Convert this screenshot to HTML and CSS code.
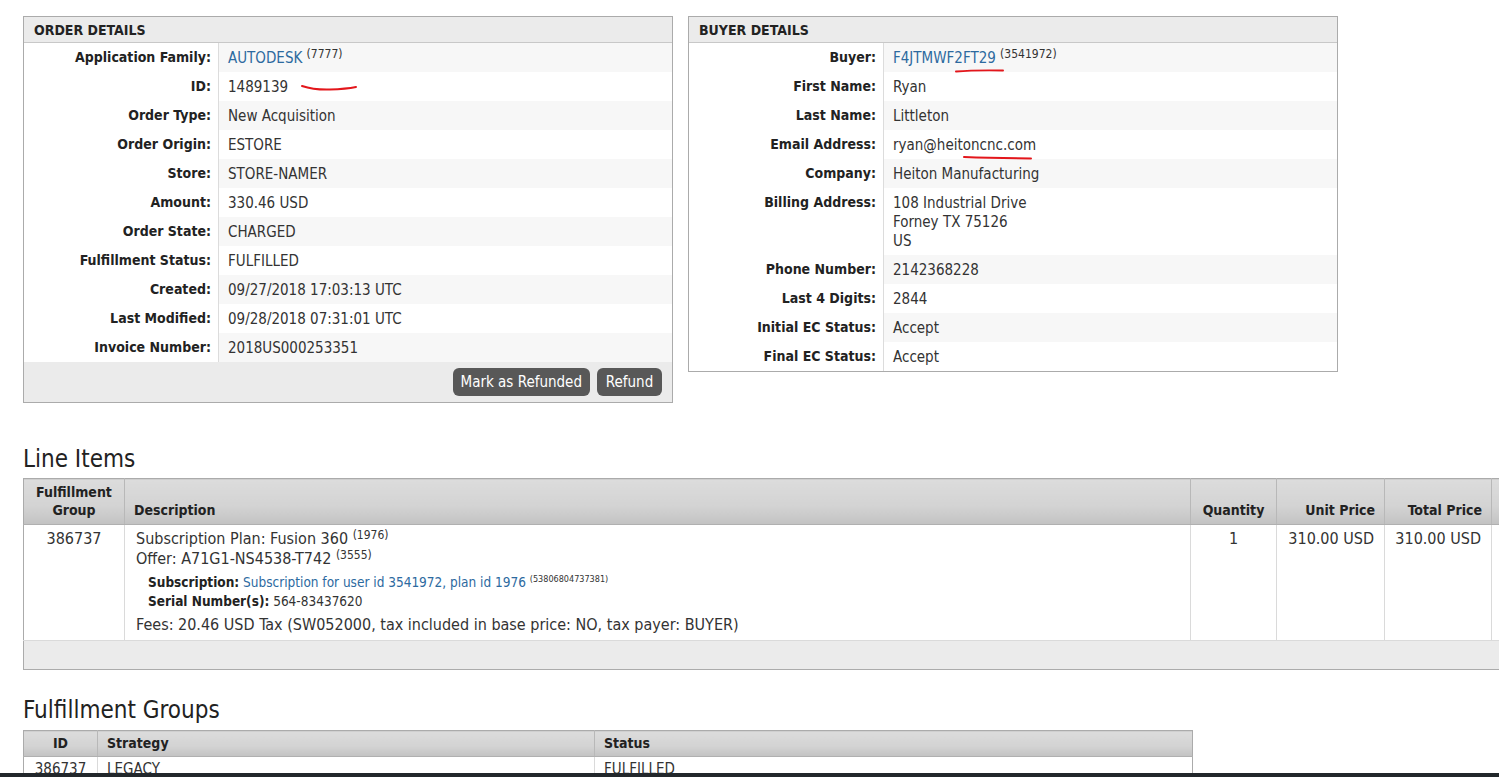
FILE: index.html
```html
<!DOCTYPE html>
<html>
<head>
<meta charset="utf-8">
<title>Order</title>
<link rel="stylesheet" href="styles.css">
</head>
<body>
<div class="page">
  <div class="panels">
    <div class="panel">
      <div class="panel-head">ORDER DETAILS</div>
      <table class="kv">
        <tr><th>Application Family:</th><td><a class="lnk">AUTODESK</a> <sup>(7777)</sup></td></tr>
        <tr><th>ID:</th><td>1489139</td></tr>
        <tr><th>Order Type:</th><td>New Acquisition</td></tr>
        <tr><th>Order Origin:</th><td>ESTORE</td></tr>
        <tr><th>Store:</th><td>STORE-NAMER</td></tr>
        <tr><th>Amount:</th><td>330.46 USD</td></tr>
        <tr><th>Order State:</th><td>CHARGED</td></tr>
        <tr><th>Fulfillment Status:</th><td>FULFILLED</td></tr>
        <tr><th>Created:</th><td>09/27/2018 17:03:13 UTC</td></tr>
        <tr><th>Last Modified:</th><td>09/28/2018 07:31:01 UTC</td></tr>
        <tr><th>Invoice Number:</th><td>2018US000253351</td></tr>
      </table>
      <div class="panel-foot">
        <button class="btn">Mark as Refunded</button>
        <button class="btn">Refund</button>
      </div>
    </div>
    <div class="panel">
      <div class="panel-head">BUYER DETAILS</div>
      <table class="kv">
        <tr><th>Buyer:</th><td><a class="lnk">F4JTMWF2FT29</a> <sup>(3541972)</sup></td></tr>
        <tr><th>First Name:</th><td>Ryan</td></tr>
        <tr><th>Last Name:</th><td>Littleton</td></tr>
        <tr><th>Email Address:</th><td>ryan@heitoncnc.com</td></tr>
        <tr><th>Company:</th><td>Heiton Manufacturing</td></tr>
        <tr><th>Billing Address:</th><td>108 Industrial Drive<br>Forney TX 75126<br>US</td></tr>
        <tr><th>Phone Number:</th><td>2142368228</td></tr>
        <tr><th>Last 4 Digits:</th><td>2844</td></tr>
        <tr><th>Initial EC Status:</th><td>Accept</td></tr>
        <tr><th>Final EC Status:</th><td>Accept</td></tr>
      </table>
    </div>
  </div>

  <h2 class="section-title">Line Items</h2>
  <table class="grid items">
    <colgroup>
      <col class="c-fg"><col class="c-desc"><col class="c-qty"><col class="c-unit"><col class="c-total"><col class="c-extra">
    </colgroup>
    <thead>
      <tr>
        <th class="center">Fulfillment<br>Group</th>
        <th class="left">Description</th>
        <th class="center">Quantity</th>
        <th class="right">Unit Price</th>
        <th class="right">Total Price</th>
        <th></th>
      </tr>
    </thead>
    <tbody>
      <tr>
        <td class="center">386737</td>
        <td class="left">
          <div class="main-line">Subscription Plan: Fusion 360 <sup>(1976)</sup></div>
          <div class="main-line">Offer: A71G1-NS4538-T742 <sup>(3555)</sup></div>
          <div class="details">
            <div><b>Subscription:</b> <a class="lnk">Subscription for user id 3541972, plan id 1976</a> <sup class="tiny">(53806804737381)</sup></div>
            <div><b>Serial Number(s):</b> 564-83437620</div>
          </div>
          <div class="main-line fees">Fees: 20.46 USD Tax (SW052000, tax included in base price: NO, tax payer: BUYER)</div>
        </td>
        <td class="center">1</td>
        <td class="right">310.00 USD</td>
        <td class="right">310.00 USD</td>
        <td></td>
      </tr>
    </tbody>
    <tfoot>
      <tr><td colspan="6"></td></tr>
    </tfoot>
  </table>

  <h2 class="section-title second">Fulfillment Groups</h2>
  <table class="grid groups">
    <colgroup><col class="g-id"><col class="g-strat"><col class="g-status"></colgroup>
    <thead>
      <tr><th class="center">ID</th><th class="left">Strategy</th><th class="left">Status</th></tr>
    </thead>
    <tbody>
      <tr><td class="center">386737</td><td class="left">LEGACY</td><td class="left">FULFILLED</td></tr>
    </tbody>
  </table>
</div>

<svg class="mark mark-id" width="60" height="8" viewBox="0 0 60 8"><path d="M2 2 Q 14 6 30 5.5 T 56 3" fill="none" stroke="#e3161b" stroke-width="2" stroke-linecap="round"/></svg>
<svg class="mark mark-buyer" width="52" height="6" viewBox="0 0 52 6"><path d="M2 3.5 Q 20 2 49 2.5" fill="none" stroke="#e3161b" stroke-width="2" stroke-linecap="round"/></svg>
<svg class="mark mark-email" width="72" height="6" viewBox="0 0 72 6"><path d="M2 2 Q 30 3 69 3.5" fill="none" stroke="#e3161b" stroke-width="2" stroke-linecap="round"/></svg>

<div class="taskbar"></div>
</body>
</html>
```

FILE: styles.css
```css
html, body {
  margin: 0;
  padding: 0;
  background: #fff;
  overflow: hidden;
}
body {
  position: relative;
  font-family: "DejaVu Sans Condensed", "DejaVu Sans", sans-serif;
  font-stretch: condensed;
  font-size: 14px;
  color: #333;
  width: 1499px;
  height: 777px;
}
.page {
  padding: 16px 0 0 23px;
}
.panels {
  display: flex;
  align-items: flex-start;
  gap: 15px;
}
.panel {
  width: 648px;
  border: 1px solid #ababab;
  background: #fff;
}
.panel-head {
  height: 25px;
  line-height: 26px;
  padding-left: 10px;
  background: #ebebeb;
  border-bottom: 1px solid #c8c8c8;
  font-weight: bold;
  color: #222;
  font-size: 14px;
}
.kv {
  width: 100%;
  border-collapse: collapse;
}
.kv th {
  width: 187px;
  text-align: right;
  vertical-align: top;
  padding: 5px 7px 5px 0;
  line-height: 19px;
  font-weight: bold;
  color: #222;
  border-right: 1px solid #dcdcdc;
  white-space: nowrap;
  font-size: 14px;
}
.kv td {
  padding: 6px 8px 4px 9px;
  line-height: 19px;
  vertical-align: top;
  font-size: 15px;
}
.kv tr:nth-child(odd) td {
  background: #f7f7f7;
}
.lnk {
  color: #2d6a9f;
  text-decoration: none;
}
sup {
  font-size: 12px;
  line-height: 0;
  vertical-align: 5px;
  color: #333;
}
.kv sup {
  font-size: 12px;
}
sup.tiny {
  font-size: 9px;
}
.panel-foot {
  display: flex;
  justify-content: flex-end;
  gap: 7px;
  padding: 6px 10px 6px 0;
  background: #ebebeb;
  height: 28px;
}
.btn {
  font-family: inherit;
  font-stretch: condensed;
  font-size: 15px;
  color: #fff;
  background: #585858;
  border: 0;
  border-radius: 6px;
  height: 28px;
  min-width: 65px;
  padding: 0 8px;
}

.section-title {
  font-weight: normal;
  font-size: 24px;
  line-height: 29px;
  height: 29px;
  margin: 42px 0 4px 0;
  color: #222;
}
.section-title.second {
  margin-top: 26px;
  margin-bottom: 5px;
}

.grid {
  border-collapse: collapse;
  table-layout: fixed;
  border: 1px solid #ababab;
}
.grid thead th {
  background: linear-gradient(#dcdcdc, #d3d3d3 60%, #c2c2c2);
  font-weight: bold;
  color: #222;
  vertical-align: bottom;
  line-height: 18px;
  padding: 4px 9px 5px;
  border-left: 1px solid #b8b8b8;
  border-bottom: 1px solid #b0b0b0;
  font-size: 14px;
}
.grid thead th:first-child {
  border-left: 0;
}
.grid .center { text-align: center; }
.grid .left { text-align: left; }
.grid .right { text-align: right; }

.items {
  width: 1560px;
}
.c-fg { width: 101px; }
.c-desc { width: 1066px; }
.c-qty { width: 86px; }
.c-unit { width: 108px; }
.c-total { width: 107px; }
.c-extra { width: 92px; }

.items tbody td {
  vertical-align: top;
  padding: 4px 10px 5px;
  font-size: 16px;
  line-height: 20px;
  border-left: 1px solid #dadada;
  height: 106px;
}
.items tbody td:first-child {
  border-left: 0;
}
.items tbody td.left {
  padding-left: 11px;
}
.details {
  margin: 4px 0 4px 12px;
  font-size: 13.5px;
  line-height: 19px;
}
.details b {
  color: #222;
}
.items tfoot td {
  height: 28px;
  padding: 0;
  background: #ebebeb;
  border-top: 1px solid #dadada;
}

.groups {
  width: 1169px;
}
.g-id { width: 74px; }
.g-strat { width: 497px; }
.g-status { width: 598px; }
.groups thead th {
  line-height: 18px;
  padding: 3px 9px 4px;
}
.groups tbody td {
  padding: 3px 9px;
  line-height: 19px;
  font-size: 15px;
  border-left: 1px solid #dadada;
}
.groups tbody td:first-child { border-left: 0; }

.mark {
  position: absolute;
  display: block;
}
.mark-id { left: 300px; top: 84px; }
.mark-buyer { left: 954px; top: 68px; }
.mark-email { left: 962px; top: 155px; }

.taskbar {
  position: absolute;
  left: 0;
  bottom: 0;
  width: 100%;
  height: 4px;
  background: #22272b;
}
```
